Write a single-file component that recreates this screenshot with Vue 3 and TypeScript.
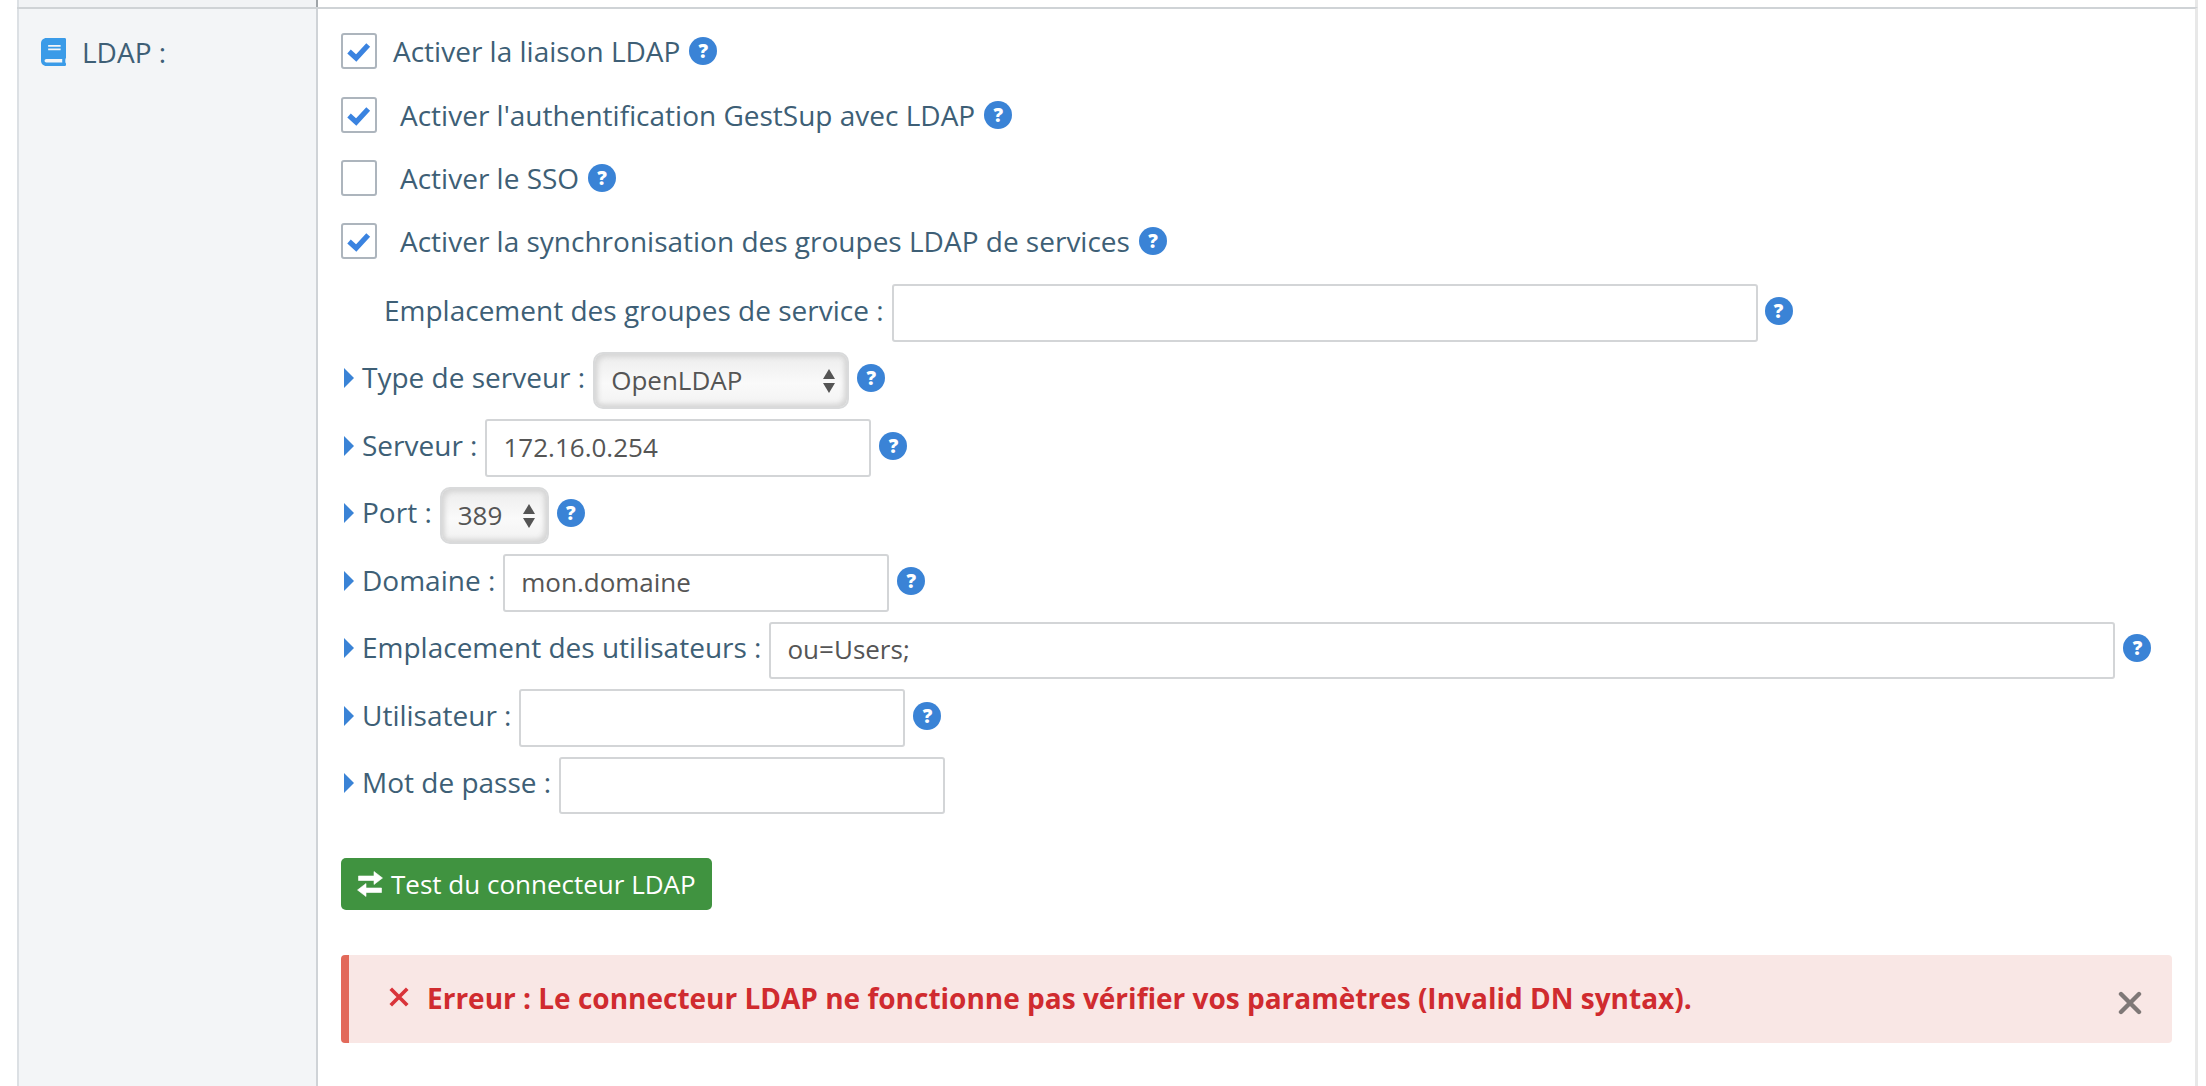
<script setup lang="ts">
interface Check { text: string; on: boolean; cls: string }
const checks: Check[] = [
  { text: 'Activer la liaison LDAP', on: true, cls: 'first' },
  { text: "Activer l'authentification GestSup avec LDAP", on: true, cls: '' },
  { text: 'Activer le SSO', on: false, cls: '' },
  { text: 'Activer la synchronisation des groupes LDAP de services', on: true, cls: '' },
]
</script>

<template>
  <div class="page">
    <div class="stub"><div class="stub-left"></div><div class="stub-right"></div></div>
    <div class="table-row">
      <div class="side">
        <svg class="book" viewBox="0 0 448 512" preserveAspectRatio="none" aria-hidden="true"><path fill="#3a9be8" d="M448 360V24c0-13.3-10.7-24-24-24H96C43 0 0 43 0 96v320c0 53 43 96 96 96h328c13.3 0 24-10.7 24-24v-16c0-7.5-3.5-14.3-8.9-18.7-4.2-15.4-4.2-59.3 0-74.7 5.4-4.3 8.9-11.1 8.9-18.6zM128 134c0-3.3 2.7-6 6-6h212c3.3 0 6 2.7 6 6v20c0 3.3-2.7 6-6 6H134c-3.3 0-6-2.7-6-6v-20zm0 64c0-3.3 2.7-6 6-6h212c3.3 0 6 2.7 6 6v20c0 3.3-2.7 6-6 6H134c-3.3 0-6-2.7-6-6v-20zm253.4 250H96c-17.7 0-32-14.3-32-32 0-17.6 14.4-32 32-32h285.4c-1.9 17.1-1.9 46.9 0 64z"/></svg>
        <span>LDAP :</span>
      </div>
      <div class="main">
        <div class="checks">
          <label v-for="c in checks" :key="c.text" class="check" :class="c.cls">
            <span class="box">
              <svg v-if="c.on" viewBox="0 0 24 24" class="tick" aria-hidden="true"><path d="M2.8 12.5l6.6 6L20.5 6.5" fill="none" stroke="#3a83e0" stroke-width="4.8"/></svg>
            </span>
            <span class="check-text">{{ c.text }}</span>
            <span class="help">?</span>
          </label>
        </div>

        <div class="fields">
          <div class="field plain">
            <span class="label">Emplacement des groupes de service :</span>
            <input class="inp w-group" type="text" value="" />
            <span class="help far">?</span>
          </div>
          <div class="field">
            <i class="caret"></i><span class="label">Type de serveur :</span>
            <span class="sel w-type"><select><option>OpenLDAP</option></select><i class="up"></i><i class="down"></i></span>
            <span class="help">?</span>
          </div>
          <div class="field">
            <i class="caret"></i><span class="label">Serveur :</span>
            <input class="inp w-std" type="text" value="172.16.0.254" />
            <span class="help">?</span>
          </div>
          <div class="field">
            <i class="caret"></i><span class="label">Port :</span>
            <span class="sel w-port"><select><option>389</option></select><i class="up"></i><i class="down"></i></span>
            <span class="help">?</span>
          </div>
          <div class="field">
            <i class="caret"></i><span class="label">Domaine :</span>
            <input class="inp w-std" type="text" value="mon.domaine" />
            <span class="help">?</span>
          </div>
          <div class="field">
            <i class="caret"></i><span class="label">Emplacement des utilisateurs :</span>
            <input class="inp w-users" type="text" value="ou=Users;" />
            <span class="help">?</span>
          </div>
          <div class="field">
            <i class="caret"></i><span class="label">Utilisateur :</span>
            <input class="inp w-std" type="text" value="" />
            <span class="help">?</span>
          </div>
          <div class="field">
            <i class="caret"></i><span class="label">Mot de passe :</span>
            <input class="inp w-std" type="password" value="" />
          </div>
        </div>

        <button class="test" type="button">
          <svg viewBox="0 0 26 26" class="swap" aria-hidden="true"><path fill="#fff" stroke="#fff" stroke-width="0.6" stroke-linejoin="round" d="M17 .5L25.5 7 17 13.5V9.5H1.5V5H17zM9 12.5L.5 19 9 25.5V21.5H24.5V17H9z"/></svg>
          <span>Test du connecteur LDAP</span>
        </button>

        <div class="alert">
          <svg viewBox="0 0 24 24" class="alert-x" aria-hidden="true"><path d="M3 3l18 18M21 3L3 21" stroke="#d9343a" stroke-width="4" fill="none"/></svg>
          <strong>Erreur : Le connecteur LDAP ne fonctionne pas vérifier vos paramètres (Invalid DN syntax).</strong>
          <svg viewBox="0 0 24 24" class="close" aria-hidden="true"><path d="M3 3l18 18M21 3L3 21" stroke="#7f7877" stroke-width="4.4" stroke-linecap="round" fill="none"/></svg>
        </div>
      </div>
    </div>
  </div>
</template>

<style>
html, body { margin: 0; background: #fff; }
</style>

<style scoped>
.page {
  width: 2206px;
  height: 1086px;
  overflow: hidden;
  font-family: "Open Sans", "Noto Sans", sans-serif;
  font-size: 28px;
  color: #3e5f76;
  box-sizing: border-box;
  padding-left: 17px;
  padding-right: 8px;
}
.stub { display: flex; height: 7px; }
.stub-left { width: 301px; background: #f1f3f5; border-left: 2px solid #dce0e4; box-sizing: border-box; }
.stub-right { flex: 1; border-left: 2px solid #9fa4a8; border-right: 3px solid #e8e8e8; margin-left: -2px; }
.table-row {
  display: flex;
  height: 1079px;
  border-top: 2px solid #cfd3d6;
  border-right: 3px solid #e8e8e8;
  box-sizing: border-box;
}
.side {
  width: 301px;
  box-sizing: border-box;
  flex: none;
  background: #f3f5f7;
  border-left: 2px solid #dce0e4;
  border-right: 2px solid #cfd3d7;
  padding: 25px 0 0 22px;
  display: flex;
  align-items: flex-start;
  gap: 16px;
  line-height: 36px;
}
.book { width: 25px; height: 28px; margin-top: 4px; flex: none; }
.main { flex: 1; padding: 24px 0 0 23px; min-width: 0; }
.checks { display: flex; flex-direction: column; gap: 27px; }
.check { display: flex; align-items: center; height: 36px; }
.check.first { margin-bottom: 1px; }
.box {
  width: 36px;
  height: 36px;
  box-sizing: border-box;
  border: 2px solid #adb5bd;
  border-radius: 3px;
  background: #fff;
  display: flex;
  align-items: center;
  justify-content: center;
  flex: none;
}
.check.first .box { margin-right: 16px; }
.check:not(.first) .box { margin-right: 23px; }
.tick { width: 26px; height: 26px; }
.check-text { white-space: nowrap; }
.help {
  width: 28px;
  height: 28px;
  border-radius: 50%;
  background: #3a83d6;
  color: #fff;
  font-size: 19px;
  font-weight: 800;
  line-height: 28px;
  text-align: center;
  flex: none;
  margin-left: 9px;
  font-family: "Open Sans", sans-serif;
}
.fields { margin-top: 25px; display: flex; flex-direction: column; gap: 10px; }
.field { display: flex; align-items: center; height: 57.5px; white-space: nowrap; }
.field .help { margin-left: 8px; position: relative; top: -2px; }
.field .help.far { margin-left: 7px; }
.field.plain { padding-left: 43px; }
.label { margin-right: 8px; position: relative; top: -3px; }
.caret {
  width: 0;
  height: 0;
  border-left: 10px solid #3a83d6;
  border-top: 10px solid transparent;
  border-bottom: 10px solid transparent;
  margin: 0 8px 0 3px;
  position: relative;
  top: -2px;
}
.inp {
  box-sizing: border-box;
  height: 100%;
  border: 2px solid #d3d5d7;
  border-radius: 3px;
  background: #fff;
  font: 26px "Open Sans", sans-serif;
  color: #555;
  padding: 0 0 2px 16px;
  outline: none;
}
.w-std { width: 386px; }
.w-group { width: 866px; }
.w-users { width: 1346px; }
.sel {
  position: relative;
  display: block;
  height: 100%;
  box-sizing: border-box;
  border: 2px solid #d9dadb;
  border-radius: 10px;
  background: linear-gradient(#ececec, #fafafa 55%, #f2f2f2);
  box-shadow: inset 3px 3px 5px #d6d6d6, inset -3px -3px 5px #d6d6d6;
}
.w-type { width: 256px; }
.w-port { width: 109px; }
.sel select {
  appearance: none;
  border: none;
  background: transparent;
  width: 100%;
  height: 100%;
  font: 26px "Open Sans", sans-serif;
  color: #555;
  padding: 0 16px;
  outline: none;
}
.sel i { position: absolute; right: 12px; width: 0; height: 0; border-left: 6px solid transparent; border-right: 6px solid transparent; }
.sel .up { top: 15px; border-bottom: 10px solid #555; }
.sel .down { top: 29px; border-top: 10px solid #555; }
.test {
  margin-top: 44px;
  display: flex;
  align-items: center;
  gap: 8px;
  width: 371px;
  height: 52px;
  padding: 0 0 0 16px;
  background: #409340;
  border: none;
  border-radius: 5px;
  color: #fff;
  font: 26px "Open Sans", sans-serif;
  white-space: nowrap;
}
.swap { width: 26px; height: 26px; flex: none; }
.alert {
  margin-top: 45px;
  width: 1831px;
  height: 88px;
  box-sizing: border-box;
  background: #f9e7e5;
  border-left: 8px solid #e2695a;
  border-radius: 4px;
  display: flex;
  align-items: center;
  padding-left: 39px;
  color: #d02b2f;
  white-space: nowrap;
}
.alert strong { font-weight: 700; margin-left: 17px; position: relative; top: -1px; }
.alert-x { width: 22px; height: 22px; flex: none; margin-top: -4px; }
.close { width: 24px; height: 24px; margin-left: auto; margin-right: 30px; margin-top: 8px; }
</style>
